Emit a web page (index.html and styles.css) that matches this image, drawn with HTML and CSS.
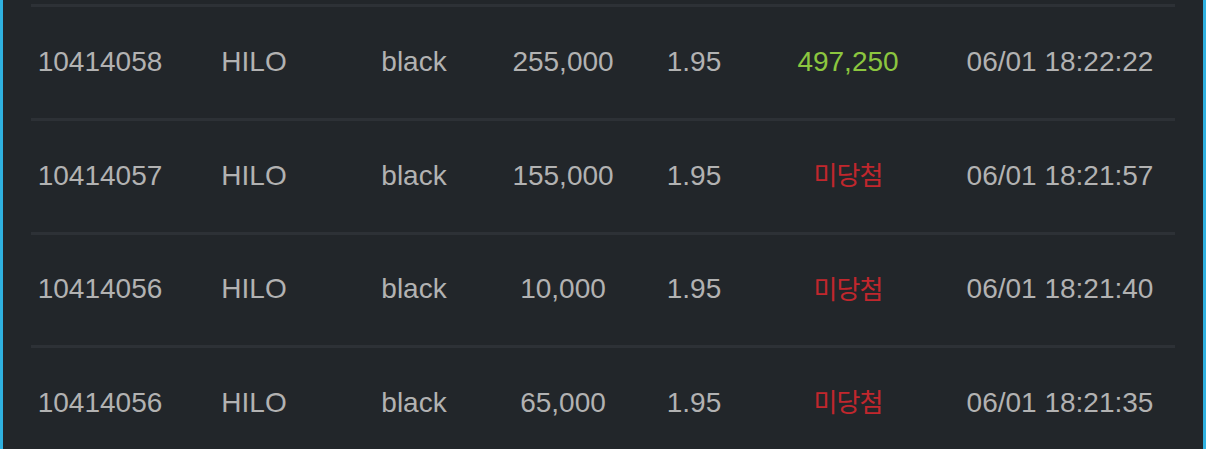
FILE: index.html
```html
<!DOCTYPE html>
<html lang="ko">
<head>
  <meta charset="UTF-8">
  <meta name="viewport" content="width=device-width, initial-scale=1.0">
  <title>Bet History</title>
  <link rel="stylesheet" href="styles.css">
</head>
<body>
  <div class="panel">
    <div class="list">
      <div class="row">
        <span>10414058</span>
        <span>HILO</span>
        <span>black</span>
        <span>255,000</span>
        <span>1.95</span>
        <span class="win">497,250</span>
        <span>06/01 18:22:22</span>
      </div>
      <div class="row">
        <span>10414057</span>
        <span>HILO</span>
        <span>black</span>
        <span>155,000</span>
        <span>1.95</span>
        <span class="lose">미당첨</span>
        <span>06/01 18:21:57</span>
      </div>
      <div class="row short">
        <span>10414056</span>
        <span>HILO</span>
        <span>black</span>
        <span>10,000</span>
        <span>1.95</span>
        <span class="lose">미당첨</span>
        <span>06/01 18:21:40</span>
      </div>
      <div class="row">
        <span>10414056</span>
        <span>HILO</span>
        <span>black</span>
        <span>65,000</span>
        <span>1.95</span>
        <span class="lose">미당첨</span>
        <span>06/01 18:21:35</span>
      </div>
    </div>
  </div>
</body>
</html>
```

FILE: styles.css
```css
html, body {
  margin: 0;
  padding: 0;
  background-color: #22262a;
}
body {
  font-family: 'Liberation Sans', Arial, 'Noto Sans CJK KR', sans-serif;
  overflow: hidden;
}
.panel {
  height: 449px;
  border-left: 3px solid #2fb1e0;
  border-right: 3px solid #2fb1e0;
  background-color: #22262a;
  padding: 4px 28px 0 28px;
}
.list {
  display: flex;
  flex-direction: column;
}
.row {
  display: grid;
  grid-template-columns: 138px 170px 150px 148px 114px 194px 230px;
  align-items: center;
  height: 109px;
  padding-bottom: 2px;
  border-top: 3px solid #2d3136;
  font-size: 28px;
  color: #b2b2b2;
}
.row.short {
  height: 108px;
}
.row span {
  text-align: center;
  white-space: nowrap;
}
.win {
  color: #8cc63f;
}
.lose {
  color: #c1272d;
  font-family: 'Noto Sans CJK KR', sans-serif;
  font-size: 26px;
  letter-spacing: -1px;
  margin-bottom: 4px;
}
```
